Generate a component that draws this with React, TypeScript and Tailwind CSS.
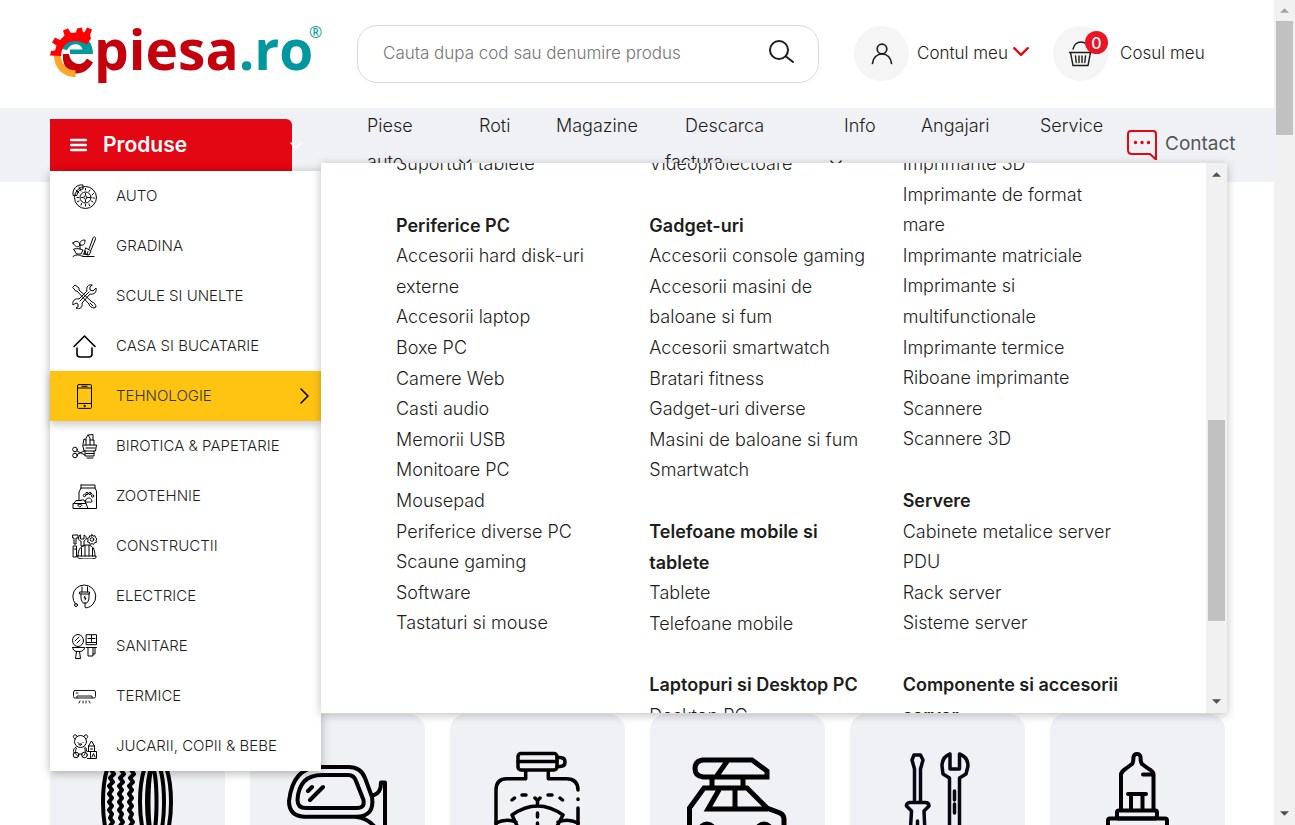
import type { ReactNode } from "react";

const stroke = {
  fill: "none",
  stroke: "currentColor",
  strokeLinecap: "round" as const,
  strokeLinejoin: "round" as const,
};

function Chevron({ className, d = "M1 1l6 6 6-6", box = "0 0 14 8" }: { className: string; d?: string; box?: string }) {
  return (
    <svg viewBox={box} className={className} aria-hidden="true" {...stroke}>
      <path d={d} />
    </svg>
  );
}

function Logo() {
  return (
    <svg viewBox="0 0 272 60" className="h-[60px] w-[272px] overflow-visible" role="img" aria-label="epiesa.ro">
      <path d="M12 25C13 17 19 12.500 27 12.500c10 0 16 6 16 17.500H20v-4.500h12.500C31 19 21 18 17 26z" fill="#00989d" />
      <path d="M13 30h6c1 9 12 15 18 4.500l6 4C39 46 32 50 25 49.500 16 48 12 39 13 30z" fill="#c4000d" />
      <path d="M4 31h6.500c.5 9 6 15 15 15.500V53C13 53 4 44 4 31z" fill="#ffa629" />
      <path
        d="M0 32l1-4.500 4-.5 1.500-5L2 19l3-5 5 2.500 4.500-4.500L13 7l5-2 3 4.500 5-.5 1-4 5-1 1 5 2-1 2-4 5 2-2 5.500 1 3.500-4 6c-8-5-16-4.500-21-.5-3 3-4.500 6-5 12z"
        transform="translate(0 -.5)"
        fill="#ff0000"
      />
      <text x="44" y="46" fontSize="55" fontWeight="700" fontFamily="'Open Sans', sans-serif" fill="#c4000d">
        piesa<tspan fill="#00989d">.ro</tspan>
      </text>
      <text x="259" y="14" fontSize="16" fontFamily="'Open Sans', sans-serif" fill="#00989d">®</text>
    </svg>
  );
}

const menuIcons: Record<string, ReactNode> = {
  auto: (
    <>
      <circle cx="13.5" cy="13.5" r="11" />
      <circle cx="13.5" cy="13.5" r="5.5" />
      <circle cx="13.5" cy="13.5" r="1.6" />
      <path d="M1 11C0 5 5 0 11 1v4C8 5 5 8 5 11zM4 6l3 3M7 3l2 4M13.5 4.500v1.500M18 6l-1 1.500M21.500 9.500L20 11M22.500 14H21M21 18l-1.500-1M17.500 21.500l-.5-1.500M13.500 20.500V22M9 21l.5-1.500M5.500 17.500L7 17M5 13.500h1.500" />
      <path d="M13.500 9.500V11M13.500 16v2M9.500 13.500H11M16 13.500h2" />
    </>
  ),
  gradina: (
    <>
      <path d="M1 9c3-3 6-2 7 2-2 3-5 2-7-2zM8 11c-1-3 1-5 5-5 0 4-1 6-5 5zm0 0v4M2 15c3-1 7 0 9 1l-2 4H5zM1 22.500c4-3 7-1 10 0h11M11 21c1-3 3-3 4 0M14 14l5 3-2 4-5-1 1-4zM17 15l4-11c1-2 3-1 2.500 1L19 16M13.500 17l-.5 3M16 17.500l-1 3" />
    </>
  ),
  scule: (
    <>
      <path d="M1 3l2-2 4 3v2l13 12c2 0 4 3 4 5l-2 1c-2 0-5-2-5-4L5 7H4z" />
      <path d="M20 1c-4-1-6 2-5 6l-8 8c-4-1-7 2-6 6l3-2 2 1 0 3-2 1c4 2 7-1 6-5l8-9c4 1 7-2 6-6l-3 3-3-1 0-3z" />
      <path d="M8 17l9-9M18 19l3 3" />
    </>
  ),
  casa: <path strokeWidth="1.600" d="M2 12.500L12.500 2 23 12.500M5 14v6c0 2 1 3 3 3h9c2 0 3-1 3-3v-6" />,
  tehnologie: (
    <>
      <rect x="5.500" y=".6" width="14" height="23.800" rx="1" />
      <path d="M5.500 4h14M5.500 19.500h14M10 2.300h5" />
      <circle cx="12.500" cy="22" r=".7" />
    </>
  ),
  birotica: (
    <>
      <path d="M11 11h13.500l-1 6h-11zM14 11V4l2-3 2 3v7M18 6h4v5M16 1l5-.5V6M11 10l1-5 2 1M13 17v5h9v-5" />
      <circle cx="3" cy="15.500" r="2.300" />
      <circle cx="3" cy="21.500" r="2.300" />
      <path d="M5 17l8 4M5 20.500l8-4M14 14h9M14 19.500h8M15 24h6" />
    </>
  ),
  zootehnie: (
    <>
      <path d="M9 1h14v3l1.500 3v17.500H1v-5h1l2-3h5M9 1v3L7 8v8M9 4h14M2 19.500h12l2 5M9 16h3l2 3.500" />
      <circle cx="12.500" cy="11.500" r="1.200" />
      <circle cx="15" cy="9.500" r="1.200" />
      <circle cx="18" cy="9.500" r="1.200" />
      <circle cx="20.500" cy="12" r="1.200" />
      <path d="M13.500 17c0-3 5-5 6.500 0 0 2-3 1-3.500 1s-3 1-3-1zM7.500 23l-2-2 1-1 1 1 1-1 1 1z" />
    </>
  ),
  constructii: (
    <>
      <path d="M1 1h5v3H4v6H2V4H1zM1.500 12h3v11h-3zM2 15h2M8 1c-3 3-1 6 1 6v5h3V7c3-1 3-5 0-6v4H9z" />
      <circle cx="20" cy="5.500" r="1.800" />
      <path d="M20 .7l1 1.500 2-.5.5 2 1.500 1-1 1.800.5 1.800-2 .4-1 1.800-1.500-1-1.800 1-.7-2-2-.5.700-2-1-1.500 2-.7.3-2 1.700.3zM6 22c0-8 4-11 9-11s8 3 8 11M5 22h19c1 3-3 3-9 3s-10 0-10-3M13 11v11M17 11v11M9.500 14v8M20.500 14v8" />
    </>
  ),
  electrice: (
    <>
      <path d="M3.500 20A11.500 11.500 0 1 1 21 20c-2 3-8 5-8 3v-4" />
      <circle cx="4" cy="21" r="1.500" />
      <path d="M10 3v5M15.500 3v5M8 8h9.500v2H8zM9 10v4c0 3 2 4 2 5h4c0-1 2-2 2-5v-4M13 12l-1 2h2l-1 2" />
    </>
  ),
  sanitare: (
    <>
      <ellipse cx="6" cy="6.500" rx="5.500" ry="6" />
      <path d="M3 7l4-4M5 9l3-3M14.500.7h10v10h-10zM14.500 8.500h10M19.500 1v7M16 4.500h7M.6 13.500h12c0 2-2 4-5 4H5c-3 0-4-2-4.400-4zM4.500 17.500L3.500 24.500h5l-1-7M14 13.500h10.500M16 13.500V22h5v-8.500M21 20h2v-6.500" />
    </>
  ),
  termice: (
    <>
      <rect x="1.500" y="6.500" width="22" height="7.500" rx="1.500" strokeWidth=".9" />
      <path d="M5 14v-2h15v2" strokeWidth=".9" />
      <path d="M6 13h13" stroke="#777" />
      <path d="M4 9h2M8 17l-1 2M11 17v2M14 17v2M17 17l1 2" strokeWidth=".9" />
    </>
  ),
  jucarii: (
    <>
      <circle cx="8.500" cy="7.500" r="6" />
      <path d="M3.500 5C0 4 1 0 4 1l1 1.500M13.500 5C17 4 16 0 13 1l-1 1.500M6 8.500h.1M11 8.500h.1M7 10h3l-1.500 1.300zM4 13c-3 2-3 4-2 6M13 13c1 1 2 2 1.500 4M4.500 14c-2 3-1 7 1 8M12.500 14c1.500 3 1 6-1 8M7 20h3" />
      <circle cx="4" cy="21" r="2.800" />
      <circle cx="12.500" cy="21" r="2.800" />
      <path d="M15.500 17.500h9v7h-9M18.500 17.500v7M20 23l1.500-3.500L23 23M16.500 17v-5l3-5 3 5v5M16.500 12h6M18.500 15h2" />
    </>
  ),
};

const categories = [
  ["auto", "AUTO"],
  ["gradina", "GRADINA"],
  ["scule", "SCULE SI UNELTE"],
  ["casa", "CASA SI BUCATARIE"],
  ["tehnologie", "TEHNOLOGIE"],
  ["birotica", "BIROTICA & PAPETARIE"],
  ["zootehnie", "ZOOTEHNIE"],
  ["constructii", "CONSTRUCTII"],
  ["electrice", "ELECTRICE"],
  ["sanitare", "SANITARE"],
  ["termice", "TERMICE"],
  ["jucarii", "JUCARII, COPII & BEBE"],
];

type Group = { title?: string; links: string[] };

const columns: Group[][] = [
  [
    { links: ["Suporturi tablete"] },
    {
      title: "Periferice PC",
      links: [
        "Accesorii hard disk-uri\nexterne",
        "Accesorii laptop",
        "Boxe PC",
        "Camere Web",
        "Casti audio",
        "Memorii USB",
        "Monitoare PC",
        "Mousepad",
        "Periferice diverse PC",
        "Scaune gaming",
        "Software",
        "Tastaturi si mouse",
      ],
    },
  ],
  [
    { links: ["Videoproiectoare"] },
    {
      title: "Gadget-uri",
      links: [
        "Accesorii console gaming",
        "Accesorii masini de\nbaloane si fum",
        "Accesorii smartwatch",
        "Bratari fitness",
        "Gadget-uri diverse",
        "Masini de baloane si fum",
        "Smartwatch",
      ],
    },
    { title: "Telefoane mobile si\ntablete", links: ["Tablete", "Telefoane mobile"] },
    { title: "Laptopuri si Desktop PC", links: ["Desktop PC"] },
  ],
  [
    {
      links: [
        "Imprimante 3D",
        "Imprimante de format\nmare",
        "Imprimante matriciale",
        "Imprimante si\nmultifunctionale",
        "Imprimante termice",
        "Riboane imprimante",
        "Scannere",
        "Scannere 3D",
      ],
    },
    { title: "Servere", links: ["Cabinete metalice server", "PDU", "Rack server", "Sisteme server"] },
    { title: "Componente si accesorii\nserver", links: [] },
  ],
];

const cards: { name: string; drawing: ReactNode }[] = [
  {
    name: "Anvelope",
    drawing: (
      <g strokeWidth="4">
        <path d="M105 40H70C58 40 53 65 53 88s5 48 17 48h35" />
        <ellipse cx="105.500" cy="88" rx="15.500" ry="48" />
        <ellipse cx="105.500" cy="88" rx="8.500" ry="40" />
        <ellipse cx="102.500" cy="88" rx="4" ry="34" />
        {[62, 72, 82].map((x) => (
          <path key={x} d={`M${x + 1} 52l-2 4 3 4-4 4 3 4-4 4 3 4-3 4 3 4-3 4 3 4-3 4 3 4-2 4 3 4-3 4`} />
        ))}
      </g>
    ),
  },
  {
    name: "Oglinzi",
    drawing: (
      <g strokeWidth="4">
        <path d="M70 53H98Q111 53 115 64L122 83Q125 102.700 106 102.700H54Q39 102 39 87Q43 53 70 53Z" />
        <path d="M72 61H98Q104 61 106 67L113.500 86Q115 94 107 94H56Q47.500 94 47.500 86Q49 61 72 61Z" />
        <path d="M58 77l4-4M60 86l13-13M124 81Q131 79 131 68.500H135V140M107 103Q120 105 127 116" />
      </g>
    ),
  },
  {
    name: "Vase lichid parbriz",
    drawing: (
      <g strokeWidth="3.500">
        <rect x="68" y="39.500" width="39" height="16.500" rx="3" />
        <path d="M68 47.500h39M107 43.500h3q5 0 5 4.500t-5 4.500h-3M75.700 57v7.700H57Q46 64.700 46 76V140M98.300 57v7.700H116Q128 64.700 128 76M128 85v.5M128 94v46" />
        <path d="M62 86l2.500-2M72 81h4M98 81h4M110 84l2.500 2M85 84l2.500 2.500 2.500-2.500M87.500 87v4M62 101Q87.500 83 113 101L104 118M62 101l8 17M87.500 99v4M87.500 109v8M46 109q10-5 20-1M128 109q-10-5-20-1" />
      </g>
    ),
  },
  {
    name: "Cutii portbagaj",
    drawing: (
      <g strokeWidth="5" strokeLinecap="butt" strokeLinejoin="miter">
        <path d="M53 46H102L117 57V63H53Q45 62 45 54.500T53 46ZM78 46L66 63M62 63v10M93 63v10" />
        <path d="M39.500 140V94L54 74H97L117 94L130 99Q134 101 134 105V140M70 74L58 95H118M85 74v21" />
        <circle cx="57" cy="117" r="7" />
        <circle cx="114" cy="117" r="7" />
      </g>
    ),
  },
  {
    name: "Scule auto",
    drawing: (
      <g strokeWidth="3.500" className="text-[#080815]">
        <path d="M64 41h6.500l2.500 5-2.500 9v33M64 41l-2 5 2.500 9v33M60 88.500H75Q79 88.500 79 92L74 97l2 43M60 88.500Q56 89 56.500 92L61.500 97 59 140M67.500 107v12" />
        <path d="M100 40Q92 43 92 52L93 60 99.500 64V140M100 40V55H109.500V40Q118 43 118 52L116 60 109.500 64V140M104.500 77v9M104.500 90v9" />
      </g>
    ),
  },
  {
    name: "Becuri auto",
    drawing: (
      <g strokeWidth="4">
        <path d="M71 95V60Q72 57 76 54.500L82 50Q83.500 48 83.500 43Q84 40 87 40T90.500 43Q90.500 48 92 50L98 54.500Q103 57 103.500 60V95M93 60.500h10M78 80h18M81 80v15M92.500 80v15" />
        <rect x="67" y="96.500" width="40" height="8" rx="2" />
        <rect x="58" y="104.500" width="59" height="10" rx="2" />
      </g>
    ),
  },
];

function Arrow({ className, up = false }: { className: string; up?: boolean }) {
  return (
    <svg viewBox="0 0 10 5" className={className} aria-hidden="true">
      <path d={up ? "M0 5L5 0l5 5z" : "M0 0l5 5 5-5z"} fill="currentColor" />
    </svg>
  );
}

function Header() {
  return (
    <header className="flex h-[108px] items-center pr-12 pl-[50px]">
      <a href="#" className="shrink-0">
        <Logo />
      </a>
      <form className="mr-[35px] ml-[35px] flex h-[58px] flex-1 items-center rounded-[20px] border border-[#dadada] pr-6 pl-[25px]">
        <input
          type="search"
          aria-label="Cauta produs"
          placeholder="Cauta dupa cod sau denumire produs"
          className="min-w-0 flex-1 text-[17px] font-light outline-none placeholder:text-[#757575]"
        />
        <button type="button" aria-label="Cauta" className="pb-1">
          <svg viewBox="0 0 26 24" className="h-6 w-[26px]" {...stroke} strokeWidth="2">
            <circle cx="11" cy="10" r="9" />
            <path d="M18 16.500l7 5.500" />
          </svg>
        </button>
      </form>
      <a href="#" className="mb-px flex w-[199px] shrink-0 items-center">
        <span className="flex size-[55px] items-center justify-center rounded-full bg-[#f5f5f5]">
          <svg viewBox="0 0 22 22" className="size-[22px]" {...stroke} strokeWidth="1.700">
            <circle cx="11" cy="6" r="4.800" />
            <path d="M1.500 20.500C2 14.500 6 11 11 11s9 3.500 9.500 9.500" />
          </svg>
        </span>
        <span className="ml-2 w-[90px] text-[17px] font-light whitespace-nowrap">Contul meu</span>
        <Chevron className="mb-1 ml-1.5 h-[9px] w-4 stroke-2 text-[#e30613]" />
      </a>
      <a href="#" className="mb-px flex w-[173px] shrink-0 items-center">
        <span className="relative flex size-[55px] items-center justify-center rounded-full bg-[#f5f5f5]">
          <svg viewBox="0 0 25 26" className="h-[26px] w-[25px]" {...stroke} strokeWidth="1.400">
            <path d="M5 8c1-4 4-7 8-7s7 3 8 7M1.500 11.500h22M2.500 11.500l2.500 13h15l2.500-13M7.500 15l.7 6.500M11 15v6.500M14 15v6.500M17.500 15l-.7 6.500" />
          </svg>
          <span className="absolute top-[5px] right-0 flex size-[23px] items-center justify-center rounded-full bg-[#ea1425] text-base font-medium text-white">
            0
          </span>
        </span>
        <span className="ml-3 text-[17px] font-light whitespace-nowrap">Cosul meu</span>
      </a>
    </header>
  );
}

function CategoryMenu() {
  return (
    <ul className="absolute top-[63px] left-[50px] z-10 w-[271px] bg-white shadow-[0_2px_9px_rgba(0,0,0,0.3)]">
      {categories.map(([id, label]) => (
        <li key={id}>
          <a
            href="#"
            className={
              id === "tehnologie"
                ? "relative flex h-[50px] items-center bg-[#ffc412] pl-[22px] text-[#333] shadow-[0_4px_8px_rgba(0,0,0,0.2)]"
                : "flex h-[50px] items-center pl-[22px]"
            }
          >
            <svg viewBox="0 0 25 25" className="size-[25px] shrink-0 text-black" aria-hidden="true" {...stroke} strokeWidth="1">
              {menuIcons[id]}
            </svg>
            <span className="ml-[19px] flex-1 text-[15px] font-light whitespace-nowrap">{label}</span>
            {id === "tehnologie" && (
              <Chevron className="mr-3 h-4 w-[9px] text-black stroke-[1.5px]" box="0 0 9 16" d="M1 1l7 7-7 7" />
            )}
          </a>
        </li>
      ))}
    </ul>
  );
}

function MegaPanel() {
  return (
    <div className="absolute top-[55px] right-[47px] left-[321px] z-20 flex h-[550px] overflow-hidden bg-white shadow-[0_2px_9px_rgba(0,0,0,0.25)]">
      <div className="-mt-3.5 grid flex-1 grid-cols-3 content-start pr-[50px] pl-[75px] text-lg leading-[1.7] whitespace-pre">
        {columns.map((groups, i) => (
          <div key={i}>
            {groups.map((group, j) => (
              <section key={j} className="mb-[31px]">
                {group.title && <h3 className="font-semibold">{group.title}</h3>}
                <ul className="font-light">
                  {group.links.map((link) => (
                    <li key={link}>
                      <a href="#" className="block">{link}</a>
                    </li>
                  ))}
                </ul>
              </section>
            ))}
          </div>
        ))}
      </div>
      <div className="flex w-[21px] flex-col items-center bg-[#f1f1f1] py-[9px] text-[#505050]">
        <Arrow up className="h-[5px] w-[9px]" />
        <div className="mt-[243px] h-[201px] w-[17px] bg-[#c1c1c1]" />
        <Arrow className="mt-auto h-[5px] w-[9px]" />
      </div>
    </div>
  );
}

function NavBar() {
  return (
    <div className="relative h-[74px] bg-[#f0f1f5]">
      <nav className="flex pl-[50px]">
        <button type="button" className="relative mt-[11px] flex h-[52px] w-[242px] shrink-0 items-center rounded-tr-md bg-[#e30613] pl-5 text-white">
          <svg viewBox="0 0 17 14" className="h-3.5 w-[17px]" {...stroke} strokeWidth="2.400">
            <path d="M1 2h15M1 7h15M1 12h15" />
          </svg>
          <span className="ml-4 text-[21px] font-semibold">Produse</span>
          <Chevron className="absolute right-[-10px] h-[7px] w-3 stroke-[1.5px]" />
        </button>
        <ul className="ml-[75px] flex text-lg leading-9 font-light whitespace-nowrap">
          <li className="w-28">
            <a href="#">
              Piese
              <span className="flex items-center">
                auto <Chevron className="ml-[56px] h-[7px] w-3 stroke-[1.5px]" />
              </span>
            </a>
          </li>
          <li className="w-[77px]"><a href="#">Roti</a></li>
          <li className="w-[109px]"><a href="#">Magazine</a></li>
          <li className="w-[165px]">
            <a href="#">
              <span className="block pl-5">Descarca</span>
              factura
            </a>
          </li>
          <li className="w-[91px]">
            <a href="#">
              <span className="block pl-3.5">Info</span>
              <Chevron className="mt-4 h-[7px] w-3 stroke-[1.5px]" />
            </a>
          </li>
          <li className="w-[119px]"><a href="#">Angajari</a></li>
          <li className="w-[87px]"><a href="#">Service</a></li>
        </ul>
        <a href="#" className="flex h-[73px] items-center text-[19px] text-[#555]">
          <svg viewBox="0 0 30 30" className="h-[30px] w-[30px] text-[#e30613]" {...stroke} strokeWidth="2">
            <path d="M29 29.500V4q0-3-3-3H4Q1 1 1 4v16q0 4 4 4h18z" />
            <path d="M8.500 12.500h.01M15 12.500h.01M21.500 12.500h.01" strokeWidth="3.500" />
          </svg>
          <span className="ml-2">Contact</span>
        </a>
      </nav>
      <CategoryMenu />
      <MegaPanel />
    </div>
  );
}

export default function App() {
  return (
    <div className="flex h-screen overflow-hidden bg-white font-[Inter,sans-serif] text-[#1d1d1b]">
      <main className="min-w-0 flex-1">
        <Header />
        <NavBar />
        <section className="mt-[532px] grid grid-cols-6 gap-[25px] pr-[49px] pl-[50px]">
          {cards.map((card) => (
            <a key={card.name} href="#" aria-label={card.name} className="flex h-[175px] justify-center rounded-2xl bg-[#f0f1f5] text-black">
              <svg viewBox="0 0 175 175" className="size-[175px]" {...stroke}>
                {card.drawing}
              </svg>
            </a>
          ))}
        </section>
      </main>
      <div className="flex w-[21px] shrink-0 flex-col items-center bg-[#f1f1f1] pt-2 pb-[9px]">
        <Arrow up className="h-[5px] w-[9px] text-[#a3a3a3]" />
        <div className="mt-2 h-[114px] w-[17px] bg-[#c1c1c1]" />
        <Arrow className="mt-auto h-[5px] w-[9px] text-[#505050]" />
      </div>
    </div>
  );
}
